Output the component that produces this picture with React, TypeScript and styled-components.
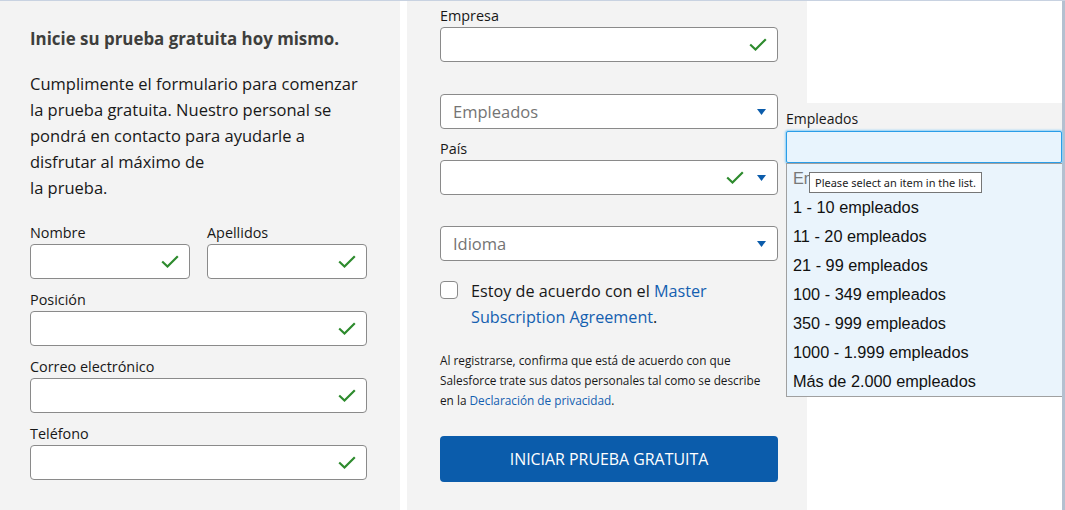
import styled, { createGlobalStyle } from 'styled-components';

const GlobalStyle = createGlobalStyle`
  body {
    margin: 0;
    font-family: 'Open Sans', 'Noto Sans', sans-serif;
    color: #181818;
  }
  * {
    box-sizing: border-box;
  }
`;

const Page = styled.div`
  display: flex;
  height: 510px;
  background: #fff;
  border-top: 1px solid #c8d2e1;
  overflow: hidden;
`;

const Panel = styled.div<{ $pad: string; $offset?: number }>`
  width: 400px;
  flex: 0 0 400px;
  margin-left: ${(p) => p.$offset ?? 0}px;
  background: #f3f3f3;
  padding: ${(p) => p.$pad};
`;

const Heading = styled.h1`
  margin: 0 0 22px;
  font-size: 16.9px;
  line-height: 20px;
  font-weight: 700;
  color: #3e3e3c;
`;

const Intro = styled.p`
  max-width: 328px;
  margin: 0 0 24px;
  font-size: 16.5px;
  line-height: 26px;
`;

const Row = styled.div`
  display: flex;
  gap: 17px;
  & > div {
    flex: 1;
  }
`;

const Field = styled.div<{ $gap?: number }>`
  margin-bottom: ${(p) => p.$gap ?? 13}px;
`;

const Label = styled.div<{ $hidden?: boolean }>`
  font-size: 14.4px;
  line-height: 16px;
  height: 16px;
  margin-bottom: 3px;
  color: #181818;
  white-space: nowrap;
  visibility: ${(p) => (p.$hidden ? 'hidden' : 'visible')};
`;

const Box = styled.div`
  display: flex;
  align-items: center;
  justify-content: flex-end;
  gap: 13px;
  height: 35px;
  padding: 0 10px 0 12px;
  background: #fff;
  border: 1px solid #8a8a8a;
  border-radius: 4px;
`;

const Placeholder = styled.span`
  flex: 1;
  font-size: 16.5px;
  color: #747474;
`;

const CheckRow = styled.label`
  display: flex;
  gap: 13px;
  margin: 17px 0 20px;
  font-size: 16.2px;
  line-height: 26px;
`;

const CheckBox = styled.span`
  flex: 0 0 18px;
  width: 18px;
  height: 18px;
  margin-top: 3px;
  background: #fff;
  border: 1px solid #8a8a8a;
  border-radius: 4px;
`;

const Link = styled.a`
  color: #1360b0;
  text-decoration: none;
`;

const Legal = styled.p`
  max-width: 326px;
  margin: 0 0 26px;
  font-size: 11.8px;
  line-height: 20px;
`;

const Submit = styled.button`
  display: block;
  width: 100%;
  height: 46px;
  border: none;
  border-radius: 4px;
  background: #0b5cab;
  color: #fff;
  font-family: inherit;
  font-size: 15.9px;
  text-transform: uppercase;
`;

const RightColumn = styled.div`
  flex: 1;
  background: #fff;
  border-right: 3px solid #b4c0d0;
  padding-top: 102px;
`;

const Picker = styled.div`
  position: relative;
  margin-left: -21px;
  background: #f3f3f3;
`;

const PickerLabel = styled.div`
  padding: 8px 0 4px;
  font-size: 14px;
  line-height: 16px;
`;

const FocusInput = styled.div`
  height: 32px;
  background: #e8f4fd;
  border: 1px solid #2a9de8;
  border-radius: 2px;
  box-shadow: 0 0 2px 1px #8fcff5;
`;

const List = styled.ul`
  margin: 0;
  padding: 0;
  list-style: none;
  background: #eaf4fc;
  border-left: 1px solid #a0a0a0;
  border-bottom: 1px solid #a0a0a0;
  border-top: 1px solid #a0a0a0;
  font-family: 'Liberation Sans', Arial, sans-serif;
  font-size: 16.3px;
`;

const Option = styled.li<{ $muted?: boolean }>`
  height: 29px;
  line-height: 29px;
  padding-left: 6px;
  color: ${(p) => (p.$muted ? '#777' : '#111')};
`;

const Tooltip = styled.div`
  position: absolute;
  left: 23px;
  top: 69px;
  padding: 2px 5px;
  background: #fff;
  border: 1px solid #767676;
  font-family: 'Noto Sans', sans-serif;
  font-size: 11px;
  line-height: 15px;
  color: #222;
  white-space: nowrap;
`;

const Check = () => (
  <svg width="18" height="13" viewBox="0 0 18 13">
    <polyline
      points="1.2,6.5 6.5,11.5 16.8,1.2"
      fill="none"
      stroke="#2e8b2e"
      strokeWidth="2.2"
    />
  </svg>
);

const Caret = () => (
  <svg width="9" height="6" viewBox="0 0 9 6" style={{ marginRight: 1 }}>
    <polygon points="0,0 9,0 4.5,6" fill="#0b5cab" />
  </svg>
);

const TextField = ({ label }: { label: string }) => (
  <Field>
    <Label>{label}</Label>
    <Box>
      <Check />
    </Box>
  </Field>
);

const SelectField = ({
  label,
  placeholder,
  valid,
  gap,
}: {
  label?: string;
  placeholder?: string;
  valid?: boolean;
  gap?: number;
}) => (
  <Field $gap={gap}>
    <Label $hidden={!label}>{label || '-'}</Label>
    <Box>
      {placeholder && <Placeholder>{placeholder}</Placeholder>}
      {valid && <Check />}
      <Caret />
    </Box>
  </Field>
);

const options = [
  '1 - 10 empleados',
  '11 - 20 empleados',
  '21 - 99 empleados',
  '100 - 349 empleados',
  '350 - 999 empleados',
  '1000 - 1.999 empleados',
  'Más de 2.000 empleados',
];

export default function App() {
  return (
    <>
      <GlobalStyle />
      <Page>
        <Panel $pad="28px 33px 0 30px">
          <Heading>Inicie su prueba gratuita hoy mismo.</Heading>
          <Intro>
            Cumplimente el formulario para comenzar la prueba gratuita. Nuestro
            personal se pondrá en contacto para ayudarle a disfrutar al máximo de
            <br />
            la prueba.
          </Intro>
          <Row>
            <TextField label="Nombre" />
            <TextField label="Apellidos" />
          </Row>
          <TextField label="Posición" />
          <TextField label="Correo electrónico" />
          <TextField label="Teléfono" />
        </Panel>

        <Panel $pad="7px 29px 0 33px" $offset={7}>
          <TextField label="Empresa" />
          <SelectField placeholder="Empleados" gap={12} />
          <SelectField label="País" valid gap={12} />
          <SelectField placeholder="Idioma" gap={0} />
          <CheckRow>
            <CheckBox />
            <span>
              Estoy de acuerdo con el <Link>Master Subscription Agreement</Link>.
            </span>
          </CheckRow>
          <Legal>
            Al registrarse, confirma que está de acuerdo con que Salesforce trate
            sus datos personales tal como se describe en la{' '}
            <Link>Declaración de privacidad</Link>.
          </Legal>
          <Submit>Iniciar prueba gratuita</Submit>
        </Panel>

        <RightColumn>
          <Picker>
            <PickerLabel>Empleados</PickerLabel>
            <FocusInput />
            <List>
              <Option $muted>Empleados</Option>
              {options.map((o) => (
                <Option key={o}>{o}</Option>
              ))}
            </List>
            <Tooltip>Please select an item in the list.</Tooltip>
          </Picker>
        </RightColumn>
      </Page>
    </>
  );
}
